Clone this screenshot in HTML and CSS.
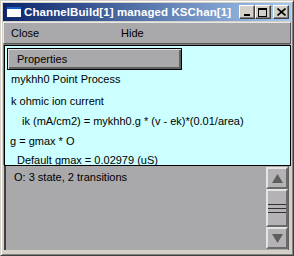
FILE: index.html
```html
<!DOCTYPE html>
<html lang="en">
<head>
  <meta charset="UTF-8" />
  <title>ChannelBuild[1] managed KSChan[1]</title>
  <link rel="stylesheet" href="styles.css">
</head>
<body>
  <div class="window">
    <div class="titlebar">
      <span class="app-icon"><span class="app-icon-bar"></span></span>
      <span class="title">ChannelBuild[1] managed KSChan[1]</span>
      <span class="tbtn tbtn-min"><span class="min-glyph"></span></span>
      <span class="tbtn tbtn-max"><span class="max-glyph"></span></span>
      <span class="tbtn tbtn-close">
        <svg width="9" height="8" viewBox="0 0 9 8"><path d="M0.5 0.5 L8.5 7.5 M8.5 0.5 L0.5 7.5" stroke="#000" stroke-width="1.6" fill="none"/></svg>
      </span>
    </div>

    <div class="menubar">
      <span class="menu-item menu-close">Close</span>
      <span class="menu-item">Hide</span>
    </div>

    <div class="info">
      <div class="prop-btn">Properties</div>
      <div class="line line-1">mykhh0 Point Process</div>
      <div class="line line-2">k ohmic ion current</div>
      <div class="line line-3">ik (mA/cm2) = mykhh0.g * (v - ek)*(0.01/area)</div>
      <div class="line line-4">g = gmax * O</div>
      <div class="line line-5">Default gmax = 0.02979 (uS)</div>
    </div>

    <div class="list">
      <div class="list-body">
        <div class="list-row">O: 3 state, 2 transitions</div>
      </div>
      <div class="scrollbar">
        <div class="sb-btn">
          <svg width="11" height="9" viewBox="0 0 11 9"><path d="M5.5 0 L11 9 L0 9 Z" fill="#5e5e5e"/></svg>
        </div>
        <div class="sb-thumb">
          <span class="grip"></span>
          <span class="grip"></span>
          <span class="grip"></span>
        </div>
        <div class="sb-btn">
          <svg width="11" height="9" viewBox="0 0 11 9"><path d="M0 0 L11 0 L5.5 9 Z" fill="#5e5e5e"/></svg>
        </div>
      </div>
    </div>
  </div>
</body>
</html>
```

FILE: styles.css
```css
body {
    margin: 0;
    padding: 0;
    background-color: #d4d0c8;
    font-family: 'Liberation Sans', Arial, sans-serif;
}
.window {
    width: 294px;
    height: 256px;
    box-sizing: border-box;
    background-color: #d4d0c8;
    border-top: 1px solid #d4d0c8;
    border-left: 1px solid #d4d0c8;
    border-right: 1px solid #404040;
    border-bottom: 1px solid #404040;
    box-shadow: inset 1px 1px 0 #ffffff, inset -1px -1px 0 #808080;
    padding: 2px 2px 0 2px;
    display: flex;
    flex-direction: column;
}
.titlebar {
    height: 18px;
    display: flex;
    align-items: center;
    background: linear-gradient(to right, #0a246a, #a6caf0);
    padding-left: 3px;
    padding-right: 2px;
}
.app-icon {
    width: 14px;
    height: 10px;
    background-color: #ffffff;
    border: 1px solid #1a2a6a;
    display: flex;
    flex-direction: column;
}
.app-icon-bar {
    height: 2px;
    background-color: #1060d0;
}
.title {
    flex: 1;
    min-width: 0;
    overflow: hidden;
    margin-left: 2px;
    color: #ffffff;
    font-weight: bold;
    font-size: 11.5px;
    letter-spacing: 0.1px;
    white-space: nowrap;
}
.tbtn {
    width: 16px;
    height: 14px;
    box-sizing: border-box;
    background-color: #d4d0c8;
    border-top: 1px solid #ffffff;
    border-left: 1px solid #ffffff;
    border-right: 1px solid #404040;
    border-bottom: 1px solid #404040;
    box-shadow: inset -1px -1px 0 #808080;
    display: flex;
    align-items: center;
    justify-content: center;
}
.tbtn-close {
    margin-left: 2px;
}
.min-glyph {
    width: 6px;
    height: 2px;
    background-color: #000;
    margin-top: 6px;
    margin-right: 1px;
}
.max-glyph {
    width: 7px;
    height: 6px;
    border: 1px solid #000;
    border-top-width: 2px;
    margin-right: 1px;
}
.menubar {
    height: 20px;
    margin-top: 1px;
    background-color: #a9a8ab;
    border-top: 1px solid #e8e8e8;
    border-left: 1px solid #e8e8e8;
    border-right: 1px solid #555555;
    border-bottom: 1px solid #555555;
    display: flex;
    align-items: center;
    font-size: 11px;
    color: #000;
}
.menu-item {
    padding-left: 7px;
}
.menu-close {
    width: 103px;
}
.info {
    height: 121px;
    margin-top: 1px;
    box-sizing: border-box;
    background-color: #ccffff;
    border: 1px solid #000;
    box-shadow: -1px -1px 0 #808080;
    margin-left: 1px;
    padding: 2px 0 0 2px;
    font-size: 11px;
    color: #000;
    overflow: hidden;
}
.prop-btn {
    width: 175px;
    height: 22px;
    box-sizing: border-box;
    background-color: #a9a8ab;
    border: 1px solid #000;
    box-shadow: inset 1px 1px 0 #e0e0e0, inset -2px -2px 0 #606060;
    padding-left: 9px;
    line-height: 20px;
}
.line {
    white-space: nowrap;
    line-height: 20px;
}
.line-1 {
    margin-top: -1px;
    padding-left: 4px;
}
.line-2 {
    margin-top: 2px;
    padding-left: 4px;
}
.line-3 {
    padding-left: 15px;
}
.line-4 {
    padding-left: 3px;
}
.line-5 {
    padding-left: 10px;
    line-height: 18px;
}
.list {
    flex: 1;
    margin-left: 1px;
    margin-right: 2px;
    margin-bottom: 5px;
    background-color: #a9a8ab;
    border-left: 2px solid #404040;
    display: flex;
}
.list-body {
    flex: 1;
    padding: 5px 0 0 8px;
    font-size: 11px;
    color: #000;
}
.scrollbar {
    width: 22px;
    padding-top: 1px;
    display: flex;
    flex-direction: column;
    border-right: 1px solid #606060;
}
.sb-btn, .sb-thumb {
    box-sizing: border-box;
    background-color: #b4b2b5;
    border-top: 2px solid #e4e4e4;
    border-left: 2px solid #e4e4e4;
    border-right: 2px solid #6a6a6a;
    border-bottom: 2px solid #6a6a6a;
}
.sb-btn {
    height: 22px;
    display: flex;
    align-items: center;
    justify-content: center;
}
.sb-thumb {
    height: 38px;
    display: flex;
    flex-direction: column;
    justify-content: center;
    gap: 3px;
}
.grip {
    height: 1px;
    background-color: #303030;
}
```
